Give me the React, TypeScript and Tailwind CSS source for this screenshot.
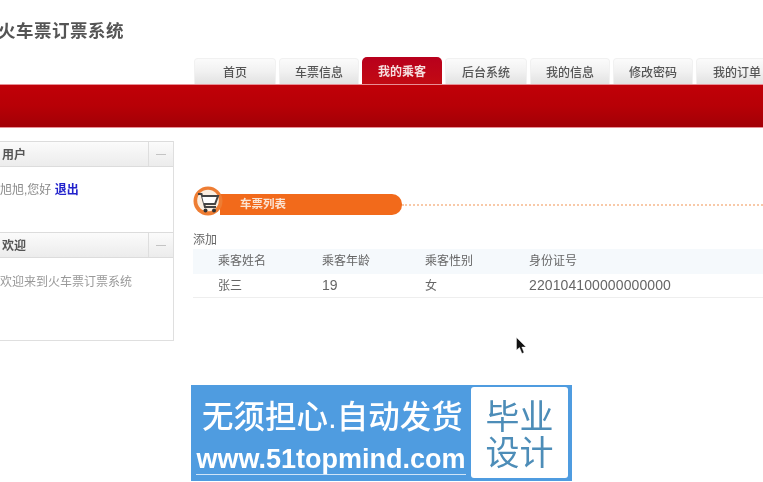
import React from "react";

const CJK = { fontFamily: '"Liberation Sans","Noto Sans CJK SC",sans-serif' };

const tabs = [
  { t: "首页", w: "w-[82px]" },
  { t: "车票信息", w: "w-[80px]" },
  { t: "我的乘客", w: "w-[80px]", active: true },
  { t: "后台系统", w: "w-[82px]" },
  { t: "我的信息", w: "w-[80px]" },
  { t: "修改密码", w: "w-[80px]" },
  { t: "我的订单", w: "w-[82px]" },
];

function Tab({ t, w, active }: { t: string; w: string; active?: boolean }) {
  return active ? (
    <div className={`${w} shrink-0 h-[27px] pt-[2px] rounded-t-[5px] bg-gradient-to-b from-[#b8001c] to-[#c20a12] flex items-center justify-center text-[12px] font-bold text-[#f6dede]`}>
      {t}
    </div>
  ) : (
    <div className={`${w} shrink-0 h-[26px] pt-[2px] rounded-t-[4px] border-t border-x border-[#f1f1f1] bg-gradient-to-b from-[#fbfbfb] via-[#f1f1f1] to-[#e2e2e2] flex items-center justify-center text-[12px] font-medium text-[#555]`}>
      {t}
    </div>
  );
}

function PanelHead({ title, cls }: { title: string; cls: string }) {
  return (
    <div className={`${cls} flex border-y border-[#dcdcdc] bg-gradient-to-b from-[#fbfbfb] to-[#ececec]`}>
      <div className="flex-1 flex items-center pl-[2px] pt-[2px] text-[12px] font-bold text-[#555]">{title}</div>
      <div className="w-[25px] border-l border-[#dedede] flex items-center justify-center">
        <div className="w-[10px] h-px bg-[#c4c4c4]" />
      </div>
    </div>
  );
}

const cols = ["w-[104px]", "w-[103px]", "w-[104px]", "flex-1"];

export default function App() {
  return (
    <div style={CJK} className="relative w-[763px] h-[482px] overflow-hidden bg-white blur-[0.6px]">
      <header className="h-[84px] relative">
        <div className="pt-[20px] -ml-[2px] text-[17.5px] leading-[22px] font-bold text-[#555] tracking-[0.5px] whitespace-nowrap">火车票订票系统</div>
        <nav className="absolute left-[194px] bottom-0 flex items-end gap-[3px]">
          {tabs.map((x) => (
            <Tab key={x.t} {...x} />
          ))}
        </nav>
      </header>
      <div className="h-[44px] border-y border-[#e88f96] bg-gradient-to-b from-[#c00008] via-[#b70006] to-[#a20006]" />

      <div className="flex items-start pt-[13px]">
        <aside className="w-[174px] h-[200px] shrink-0 border-r border-b border-[#dfdfdf]">
          <PanelHead title="用户" cls="h-[26px]" />
          <div className="h-[65px] pt-[15px] text-[12px] leading-[16px] text-[#8a8a8a]">
            旭旭,您好 <span className="font-bold text-[#2222cc]">退出</span>
          </div>
          <PanelHead title="欢迎" cls="h-[26px]" />
          <div className="pt-[16px] text-[12px] leading-[16px] text-[#999]">欢迎来到火车票订票系统</div>
        </aside>

        <main className="flex-1 pl-[19px] pt-[45px] min-w-0">
          <div className="flex items-center h-[30px]">
            <svg width="30" height="30" viewBox="0 0 30 30" className="shrink-0 relative z-10">
              <circle cx="15" cy="15" r="14.5" fill="#ee7d33" />
              <circle cx="15" cy="14.5" r="10.8" fill="#fbeee0" />
              <path d="M5 8 L8.5 8 L12 21 L23 21" fill="none" stroke="#444" strokeWidth="2" />
              <path d="M9 10 L25 10 L22 18 L11 18" fill="#fff" stroke="#444" strokeWidth="2" />
              <circle cx="12.5" cy="24.5" r="2" fill="#333" />
              <circle cx="21" cy="24.5" r="2" fill="#333" />
            </svg>
            <div className="-ml-[3px] mt-[7px] w-[182px] h-[21px] rounded-r-[10px] bg-[#f26a1b] pl-[20px] flex items-center text-[11.5px] font-bold text-[#fbe3d2]">
              车票列表
            </div>
            <div className="flex-1 mt-[7px] border-t-2 border-dotted border-[#f8c9a8]" />
          </div>

          <div className="mt-[16px] text-[12px] leading-[16px] text-[#666]">添加</div>
          <div className="h-[25px] mt-px pb-[2px] flex items-center pl-[25px] bg-[#f5f9fc] text-[12px] text-[#666]">
            {["乘客姓名", "乘客年龄", "乘客性别", "身份证号"].map((c, i) => (
              <div key={c} className={cols[i]}>{c}</div>
            ))}
          </div>
          <div className="h-[24px] flex items-center pl-[25px] border-b border-[#eeeeee] text-[#666]">
            <div className={`${cols[0]} text-[12px]`}>张三</div>
            <div className={`${cols[1]} text-[14px]`}>19</div>
            <div className={`${cols[2]} text-[12px]`}>女</div>
            <div className={`${cols[3]} text-[14px] tracking-[0.1px]`}>220104100000000000</div>
          </div>
        </main>
      </div>

      <svg width="12" height="19" viewBox="0 0 12 19" className="absolute left-[516px] top-[337px]">
        <path d="M0.5 0.5 L0.5 13 L3.5 10.5 L6 16.5 L8 15.5 L5.8 10 L10 10 Z" fill="#111" stroke="#fff" strokeWidth="0.4" />
      </svg>

      <div className="absolute left-[191px] top-[385px] w-[381px] h-[96px] bg-[#4f9ce0] flex items-stretch pt-[2px] pb-[3px] pr-[4px]">
        <div className="w-[280px] flex flex-col items-center text-white">
          <div className="mt-[12px] pl-[3px] text-[31.5px] leading-[36px] font-medium whitespace-nowrap">无须担心.自动发货</div>
          <div className="mt-[10px] text-[27px] leading-[29px] font-bold border-b border-[#cfe4f7] whitespace-nowrap">www.51topmind.com</div>
        </div>
        <div className="flex-1 rounded-[3px] bg-white pt-[4px] flex flex-col items-center justify-center text-[34px] leading-[36px] text-[#4d8db8]">
          <div>毕业</div>
          <div>设计</div>
        </div>
      </div>
    </div>
  );
}
